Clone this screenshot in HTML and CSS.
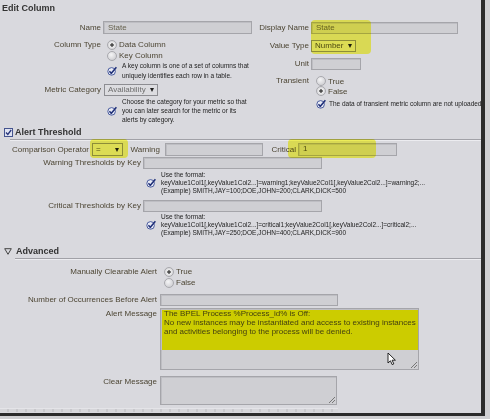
FILE: index.html
```html
<!DOCTYPE html>
<html lang="en">
<head>
    <meta charset="utf-8"/>
    <title>Edit Column</title>
    <link rel="stylesheet" href="styles.css">
</head>
<body>
<div class="dialog">
    <div class="title">Edit Column</div>

    <div class="top">
        <div class="col col-left">
            <div class="field f-name">
                <span class="lbl">Name</span>
                <span class="input w-name">State</span>
            </div>
            <div class="field f-ctype">
                <span class="lbl">Column Type</span>
                <div class="radios">
                    <div class="radio on">Data Column</div>
                    <div class="radio">Key Column</div>
                </div>
            </div>
            <div class="help h-key">
                <svg viewBox="0 0 10 10"><circle cx="4.6" cy="5.4" r="3.8" fill="#e9ecf6" stroke="#4a5c9e" stroke-width="1"/><path d="M2.4 5.2 L4.3 7.3 L9.4 1.2" fill="none" stroke="#1f2f78" stroke-width="1.5"/></svg>
                <p>A key column is one of a set of columns that<br>uniquely identifies each row in a table.</p>
            </div>
            <div class="field f-mcat">
                <span class="lbl">Metric Category</span>
                <span class="select w-mcat">Availability</span>
            </div>
            <div class="help h-mcat">
                <svg viewBox="0 0 10 10"><circle cx="4.6" cy="5.4" r="3.8" fill="#e9ecf6" stroke="#4a5c9e" stroke-width="1"/><path d="M2.4 5.2 L4.3 7.3 L9.4 1.2" fill="none" stroke="#1f2f78" stroke-width="1.5"/></svg>
                <p>Choose the category for your metric so that<br>you can later search for the metric or its<br>alerts by category.</p>
            </div>
        </div>

        <div class="col col-right">
            <div class="field f-dname">
                <span class="lbl">Display Name</span>
                <span class="input w-dname">State</span>
            </div>
            <div class="field f-vtype">
                <span class="lbl">Value Type</span>
                <span class="select w-vtype dark">Number</span>
            </div>
            <div class="field f-unit">
                <span class="lbl">Unit</span>
                <span class="input w-unit"></span>
            </div>
            <div class="field f-trans">
                <span class="lbl">Transient</span>
                <div class="radios">
                    <div class="radio">True</div>
                    <div class="radio on">False</div>
                </div>
            </div>
            <div class="help h-trans">
                <svg viewBox="0 0 10 10"><circle cx="4.6" cy="5.4" r="3.8" fill="#e9ecf6" stroke="#4a5c9e" stroke-width="1"/><path d="M2.4 5.2 L4.3 7.3 L9.4 1.2" fill="none" stroke="#1f2f78" stroke-width="1.5"/></svg>
                <p>The data of transient metric column are not uploaded.</p>
            </div>
        </div>
    </div>

    <div class="sec">
        <svg class="chk" viewBox="0 0 9 9"><rect x="0.5" y="0.5" width="8" height="8" fill="#dfe3f2" stroke="#45548f"/><path d="M2 4.5 L3.8 6.5 L7.2 2" fill="none" stroke="#27357a" stroke-width="1.3"/></svg>
        Alert Threshold
    </div>
    <div class="rule rule-alert"></div>

    <div class="thr-row">
        <span class="t-lbl t-op">Comparison Operator</span>
        <span class="select w-op">=</span>
        <span class="t-lbl t-warn">Warning</span>
        <span class="input w-warn"></span>
        <span class="t-lbl t-crit">Critical</span>
        <span class="input w-crit">1</span>
    </div>
    <div class="field f-wkey">
        <span class="lbl">Warning Thresholds by Key</span>
        <span class="input w-key"></span>
    </div>
    <div class="help h-fmt">
        <svg viewBox="0 0 10 10"><circle cx="4.6" cy="5.4" r="3.8" fill="#e9ecf6" stroke="#4a5c9e" stroke-width="1"/><path d="M2.4 5.2 L4.3 7.3 L9.4 1.2" fill="none" stroke="#1f2f78" stroke-width="1.5"/></svg>
        <p>Use the format:<br>keyValue1Col1[,keyValue1Col2...]=warning1;keyValue2Col1[,keyValue2Col2...]=warning2;...<br>(Example) SMITH,JAY=100;DOE,JOHN=200;CLARK,DICK=500</p>
    </div>
    <div class="field f-ckey">
        <span class="lbl">Critical Thresholds by Key</span>
        <span class="input w-key"></span>
    </div>
    <div class="help h-fmt h-fmt2">
        <svg viewBox="0 0 10 10"><circle cx="4.6" cy="5.4" r="3.8" fill="#e9ecf6" stroke="#4a5c9e" stroke-width="1"/><path d="M2.4 5.2 L4.3 7.3 L9.4 1.2" fill="none" stroke="#1f2f78" stroke-width="1.5"/></svg>
        <p>Use the format:<br>keyValue1Col1[,keyValue1Col2...]=critical1;keyValue2Col1[,keyValue2Col2...]=critical2;...<br>(Example) SMITH,JAY=250;DOE,JOHN=400;CLARK,DICK=900</p>
    </div>

    <div class="sec sec-adv">
        <svg class="tri" viewBox="0 0 8 7"><path d="M0.7 0.7 L7.3 0.7 L4 6.3 Z" fill="none" stroke="#444" stroke-width="1"/></svg>
        Advanced
    </div>
    <div class="rule rule-adv"></div>

    <div class="field f-manual">
        <span class="lbl">Manually Clearable Alert</span>
        <div class="radios">
            <div class="radio on">True</div>
            <div class="radio">False</div>
        </div>
    </div>
    <div class="field f-occ">
        <span class="lbl">Number of Occurrences Before Alert</span>
        <span class="input w-occ"></span>
    </div>
    <div class="field f-msg">
        <span class="lbl">Alert Message</span>
        <div class="textarea ta-msg">
            <p>The BPEL Process %Process_id% is Off:<br>No new instances may be instantiated and access to existing instances<br>and activities belonging to the process will be denied.</p>
            <svg class="cursor" viewBox="0 0 10 14"><path d="M1 1 L1 11 L3.4 8.8 L5.2 12.6 L6.8 11.9 L5.1 8.2 L8.4 8.2 Z" fill="#fff" stroke="#111" stroke-width="0.9"/></svg>
        </div>
    </div>
    <div class="field f-clear">
        <span class="lbl">Clear Message</span>
        <div class="textarea ta-clear"></div>
    </div>
    <div class="tail"></div>

    <span class="hl hl-name"></span>
    <span class="hl hl-op"></span>
    <span class="hl hl-crit"></span>
</div>
</body>
</html>
```

FILE: styles.css
```css
* {
    box-sizing: border-box;
}
html, body {
    margin: 0;
    padding: 0;
}
body {
    width: 490px;
    height: 419px;
    overflow: hidden;
    background: #cfcfd2;
    font-family: "Liberation Sans", Arial, sans-serif;
    font-size: 8px;
    color: #4d4634;
}
.dialog {
    position: relative;
    width: 485px;
    height: 416px;
    background: #d9d9de;
    border-right: 4px solid #2b2b2b;
    border-bottom: 3px solid #2b2b2b;
    overflow: hidden;
}
.title {
    height: 18px;
    padding: 3px 0 0 2px;
    font-size: 9px;
    font-weight: bold;
    line-height: 11px;
    color: #333;
}

/* two column block */
.top {
    display: flex;
    height: 106px;
}
.col-left {
    width: 254px;
}
.col-right {
    flex: 1;
}
.field {
    display: flex;
    align-items: flex-start;
}
.lbl {
    flex: none;
    text-align: right;
    padding-right: 2px;
    line-height: 12px;
    white-space: nowrap;
}
.col-left .lbl {
    width: 103px;
}
.col-right .lbl {
    width: 59px;
}

/* controls */
.input {
    display: block;
    height: 12px;
    padding: 0 4px;
    background: #cfcfd3;
    border: 1px solid #a5a5aa;
    box-shadow: inset 1px 1px 0 #bebec3;
    line-height: 10px;
    color: #67634f;
    white-space: nowrap;
    overflow: hidden;
}
.select {
    display: flex;
    align-items: center;
    justify-content: space-between;
    height: 12px;
    padding: 0 3px;
    background: #dcdce0;
    border: 1px solid #8d8d92;
    color: #6e6e6e;
    line-height: 10px;
    white-space: nowrap;
}
.select::after {
    content: "";
    border-left: 2.5px solid transparent;
    border-right: 2.5px solid transparent;
    border-top: 4px solid #1e1e1e;
}
.select.dark {
    color: #4e4a2a;
}
.radios {
    display: flex;
    flex-direction: column;
}
.radio {
    display: flex;
    align-items: center;
    gap: 2px;
    height: 11px;
    white-space: nowrap;
}
.radio::before {
    content: "";
    flex: none;
    width: 8px;
    height: 8px;
    border-radius: 50%;
    border: 1px solid #a9a9ae;
    background: radial-gradient(circle at 40% 35%, #f5f5f6, #c5c5ca);
}
.radio.on::before {
    background: radial-gradient(circle, #4e4e4e 0 1.4px, #eeeeef 2px, #c6c6ca);
}
.help {
    display: flex;
    align-items: center;
    gap: 5px;
    font-size: 6.5px;
    color: #222;
}
.help svg {
    flex: none;
    width: 10px;
    height: 10px;
}
.help p {
    margin: 0;
    white-space: nowrap;
}

/* left column rows */
.f-name {
    margin-top: 3px;
}
.f-name .lbl {
    line-height: 13px;
}
.w-name {
    width: 149px;
    height: 13px;
    line-height: 11px;
}
.f-ctype {
    margin-top: 5px;
}
.f-ctype .lbl {
    line-height: 11px;
}
.f-ctype .radios {
    padding-left: 4px;
}
.h-key {
    margin-left: 107px;
    line-height: 10px;
}
.f-mcat {
    margin-top: 3px;
}
.w-mcat {
    width: 54px;
    margin-left: 1px;
}
.h-mcat {
    margin-top: 1px;
    margin-left: 107px;
    line-height: 9px;
}

/* right column rows */
.f-dname {
    margin-top: 4px;
}
.w-dname {
    width: 147px;
}
.f-vtype {
    margin-top: 6px;
}
.w-vtype {
    width: 45px;
}
.f-unit {
    margin-top: 6px;
}
.w-unit {
    width: 50px;
}
.f-trans {
    margin-top: 6px;
}
.f-trans .lbl {
    line-height: 10px;
}
.f-trans .radio {
    height: 10px;
}
.f-trans .radios {
    padding-left: 5px;
}
.h-trans {
    margin-top: 3px;
    margin-left: 64px;
    gap: 3px;
    line-height: 10px;
}

/* section headers */
.sec {
    display: flex;
    align-items: center;
    gap: 2px;
    height: 14px;
    margin-top: 1px;
    padding-left: 4px;
    font-size: 9px;
    font-weight: bold;
    color: #333;
}
.sec .chk {
    width: 9px;
    height: 9px;
}
.sec .tri {
    width: 8px;
    height: 7px;
    margin-right: 2px;
}
.sec-adv {
    margin-top: 7px;
}
.rule {
    height: 2px;
    border-top: 1px solid #a1a1a7;
    border-bottom: 1px solid #ececf0;
}
.rule-alert {
    margin-left: 10px;
}
.rule-adv {
    margin-left: 15px;
}

/* alert threshold */
.thr-row {
    display: flex;
    align-items: center;
    height: 13px;
    margin-top: 2px;
}
.thr-row .input,
.thr-row .select {
    height: 13px;
}
.t-lbl {
    flex: none;
    text-align: right;
    white-space: nowrap;
}
.t-op {
    width: 90px;
    padding-right: 1px;
}
.w-op {
    width: 31px;
    margin-left: 2px;
    color: #4e4a2a;
}
.t-warn {
    width: 40px;
    padding-right: 3px;
}
.w-warn {
    width: 98px;
    margin-left: 2px;
}
.t-crit {
    width: 34px;
    padding-right: 1px;
}
.w-crit {
    width: 99px;
    margin-left: 1px;
    color: #4e4a2a;
}
.f-wkey,
.f-ckey {
    margin-top: 1px;
}
.f-wkey .lbl,
.f-ckey .lbl {
    width: 143px;
}
.f-ckey {
    margin-top: 5px;
}
.w-key {
    width: 179px;
}
.h-fmt {
    margin-top: 2px;
    margin-left: 146px;
    line-height: 8px;
}
.h-fmt2 {
    margin-top: 1px;
}

/* advanced */
.f-manual,
.f-occ,
.f-msg,
.f-clear {
    margin-top: 6px;
}
.f-manual .lbl,
.f-occ .lbl,
.f-msg .lbl,
.f-clear .lbl {
    width: 160px;
    padding-right: 3px;
}
.f-manual .lbl {
    line-height: 11px;
}
.f-manual .radios {
    padding-left: 4px;
}
.w-occ {
    width: 178px;
}
.f-msg {
    margin-top: 2px;
}
.f-msg .lbl,
.f-clear .lbl {
    line-height: 11px;
}
.textarea {
    position: relative;
    border: 1px solid #a5a5aa;
    background: #cfcfd3;
    box-shadow: inset 1px 1px 0 #bebec3;
}
.textarea::after {
    content: "";
    position: absolute;
    right: 1px;
    bottom: 1px;
    width: 6px;
    height: 6px;
    background: linear-gradient(135deg, transparent 45%, #777 45% 55%, transparent 55% 70%, #777 70% 80%, transparent 80%);
}
.ta-msg {
    width: 259px;
    height: 62px;
    padding: 0 3px;
    background: linear-gradient(#cccc00 0 41px, #cfcfd3 41px);
    color: #45420f;
    line-height: 9px;
}
.ta-msg p {
    margin: 0;
    white-space: nowrap;
}
.cursor {
    position: absolute;
    left: 226px;
    top: 43px;
    width: 10px;
    height: 14px;
}
.ta-clear {
    width: 177px;
    height: 29px;
}
.tail {
    width: 338px;
    height: 4px;
    margin-top: 3px;
    border-top: 1px solid #e4e4e8;
    background: repeating-linear-gradient(90deg, #d6d6da 0 7px, #c8c8cc 7px 9px);
}

/* marker highlights drawn over the screenshot */
.hl {
    position: absolute;
    background: #ffff38;
    mix-blend-mode: multiply;
    opacity: 0.8;
    border-radius: 4px;
}
.hl-name {
    left: 311px;
    top: 20px;
    width: 60px;
    height: 34px;
}
.hl-op {
    left: 90px;
    top: 139px;
    width: 38px;
    height: 19px;
}
.hl-crit {
    left: 288px;
    top: 139px;
    width: 88px;
    height: 19px;
}
```
